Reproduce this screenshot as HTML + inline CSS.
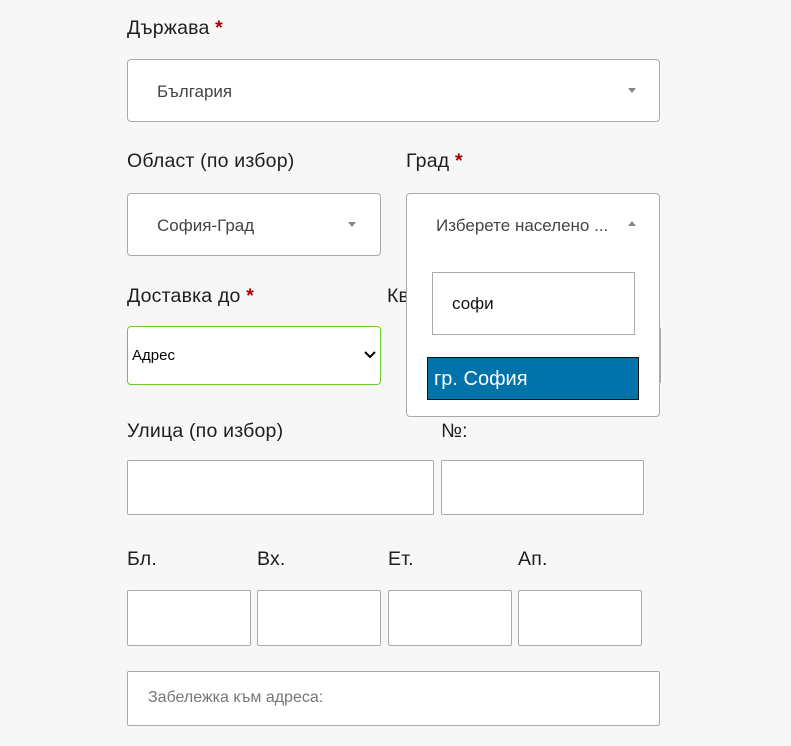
<!DOCTYPE html><html><head><style>
body{margin:0;width:791px;height:746px;background:#f7f7f7;font-family:"Liberation Sans",sans-serif;position:relative;overflow:hidden;color:#1e1e1e}
.l{position:absolute;font-size:19.5px;line-height:22px;letter-spacing:0.2px}
.r{color:#a00;font-weight:bold}
.b{position:absolute;background:#fff;border:1px solid #aaa;box-sizing:border-box}
.rd{border-radius:4px}
.t{position:absolute;font-size:17px;color:#444}
.ar{position:absolute;width:0;height:0;border-left:4px solid transparent;border-right:4px solid transparent}
</style></head><body>
<div class="l" style="left:127px;top:17px">Държава <span class="r">*</span></div>
<div class="b rd" style="left:127px;top:59px;width:533px;height:63px"></div>
<div class="t" style="left:157px;top:82px">България</div>
<div class="ar" style="left:628px;top:88px;border-top:5px solid #888"></div>

<div class="l" style="left:127px;top:150px">Област (по избор)</div>
<div class="l" style="left:406px;top:150px">Град <span class="r">*</span></div>
<div class="b rd" style="left:127px;top:193px;width:254px;height:63px"></div>
<div class="t" style="left:157px;top:216px">София-Град</div>
<div class="ar" style="left:348px;top:222px;border-top:5px solid #888"></div>

<div class="l" style="left:127px;top:285px">Доставка до <span class="r">*</span></div>
<div class="l" style="left:387px;top:285px">Кв</div>
<div class="b rd" style="left:127px;top:326px;width:254px;height:59px;border-color:#6c3"></div>
<div style="position:absolute;left:132px;top:347px;font-size:15px;color:#000">Адрес</div>
<svg style="position:absolute;left:364px;top:351px" width="12" height="8"><path d="M1 1l5 5 5-5" stroke="#000" stroke-width="2" fill="none"/></svg>
<div class="b" style="left:600px;top:326px;width:61px;height:59px;border-radius:4px"></div>

<div class="b rd" style="left:406px;top:193px;width:254px;height:224px"></div>
<div class="t" style="left:436px;top:216px">Изберете населено ...</div>
<div class="ar" style="left:628px;top:221px;border-bottom:5px solid #888"></div>
<div class="b" style="left:432px;top:272px;width:203px;height:63px"></div>
<div style="position:absolute;left:452px;top:294px;font-size:17px;color:#111">софи</div>
<div style="position:absolute;left:427px;top:357px;width:212px;height:43px;background:#0073aa;border:1px solid #111;box-sizing:border-box;color:#fff;font-size:20px;line-height:42px;padding-left:6px">гр. София</div>

<div class="l" style="left:127px;top:420px">Улица (по избор)</div>
<div class="l" style="left:441px;top:420px">№:</div>
<div class="b" style="left:127px;top:460px;width:307px;height:55px;border-radius:2px"></div>
<div class="b" style="left:441px;top:460px;width:203px;height:55px;border-radius:2px"></div>

<div class="l" style="left:127px;top:548px">Бл.</div>
<div class="l" style="left:257px;top:548px">Вх.</div>
<div class="l" style="left:388px;top:548px">Ет.</div>
<div class="l" style="left:518px;top:548px">Ап.</div>
<div class="b" style="left:127px;top:590px;width:124px;height:56px;border-radius:2px"></div>
<div class="b" style="left:257px;top:590px;width:124px;height:56px;border-radius:2px"></div>
<div class="b" style="left:388px;top:590px;width:124px;height:56px;border-radius:2px"></div>
<div class="b" style="left:518px;top:590px;width:124px;height:56px;border-radius:2px"></div>

<div class="b" style="left:127px;top:671px;width:533px;height:55px;border-radius:2px"></div>
<div style="position:absolute;left:148px;top:689px;font-size:16px;color:#777">Забележка към адреса:</div>
</body></html>
